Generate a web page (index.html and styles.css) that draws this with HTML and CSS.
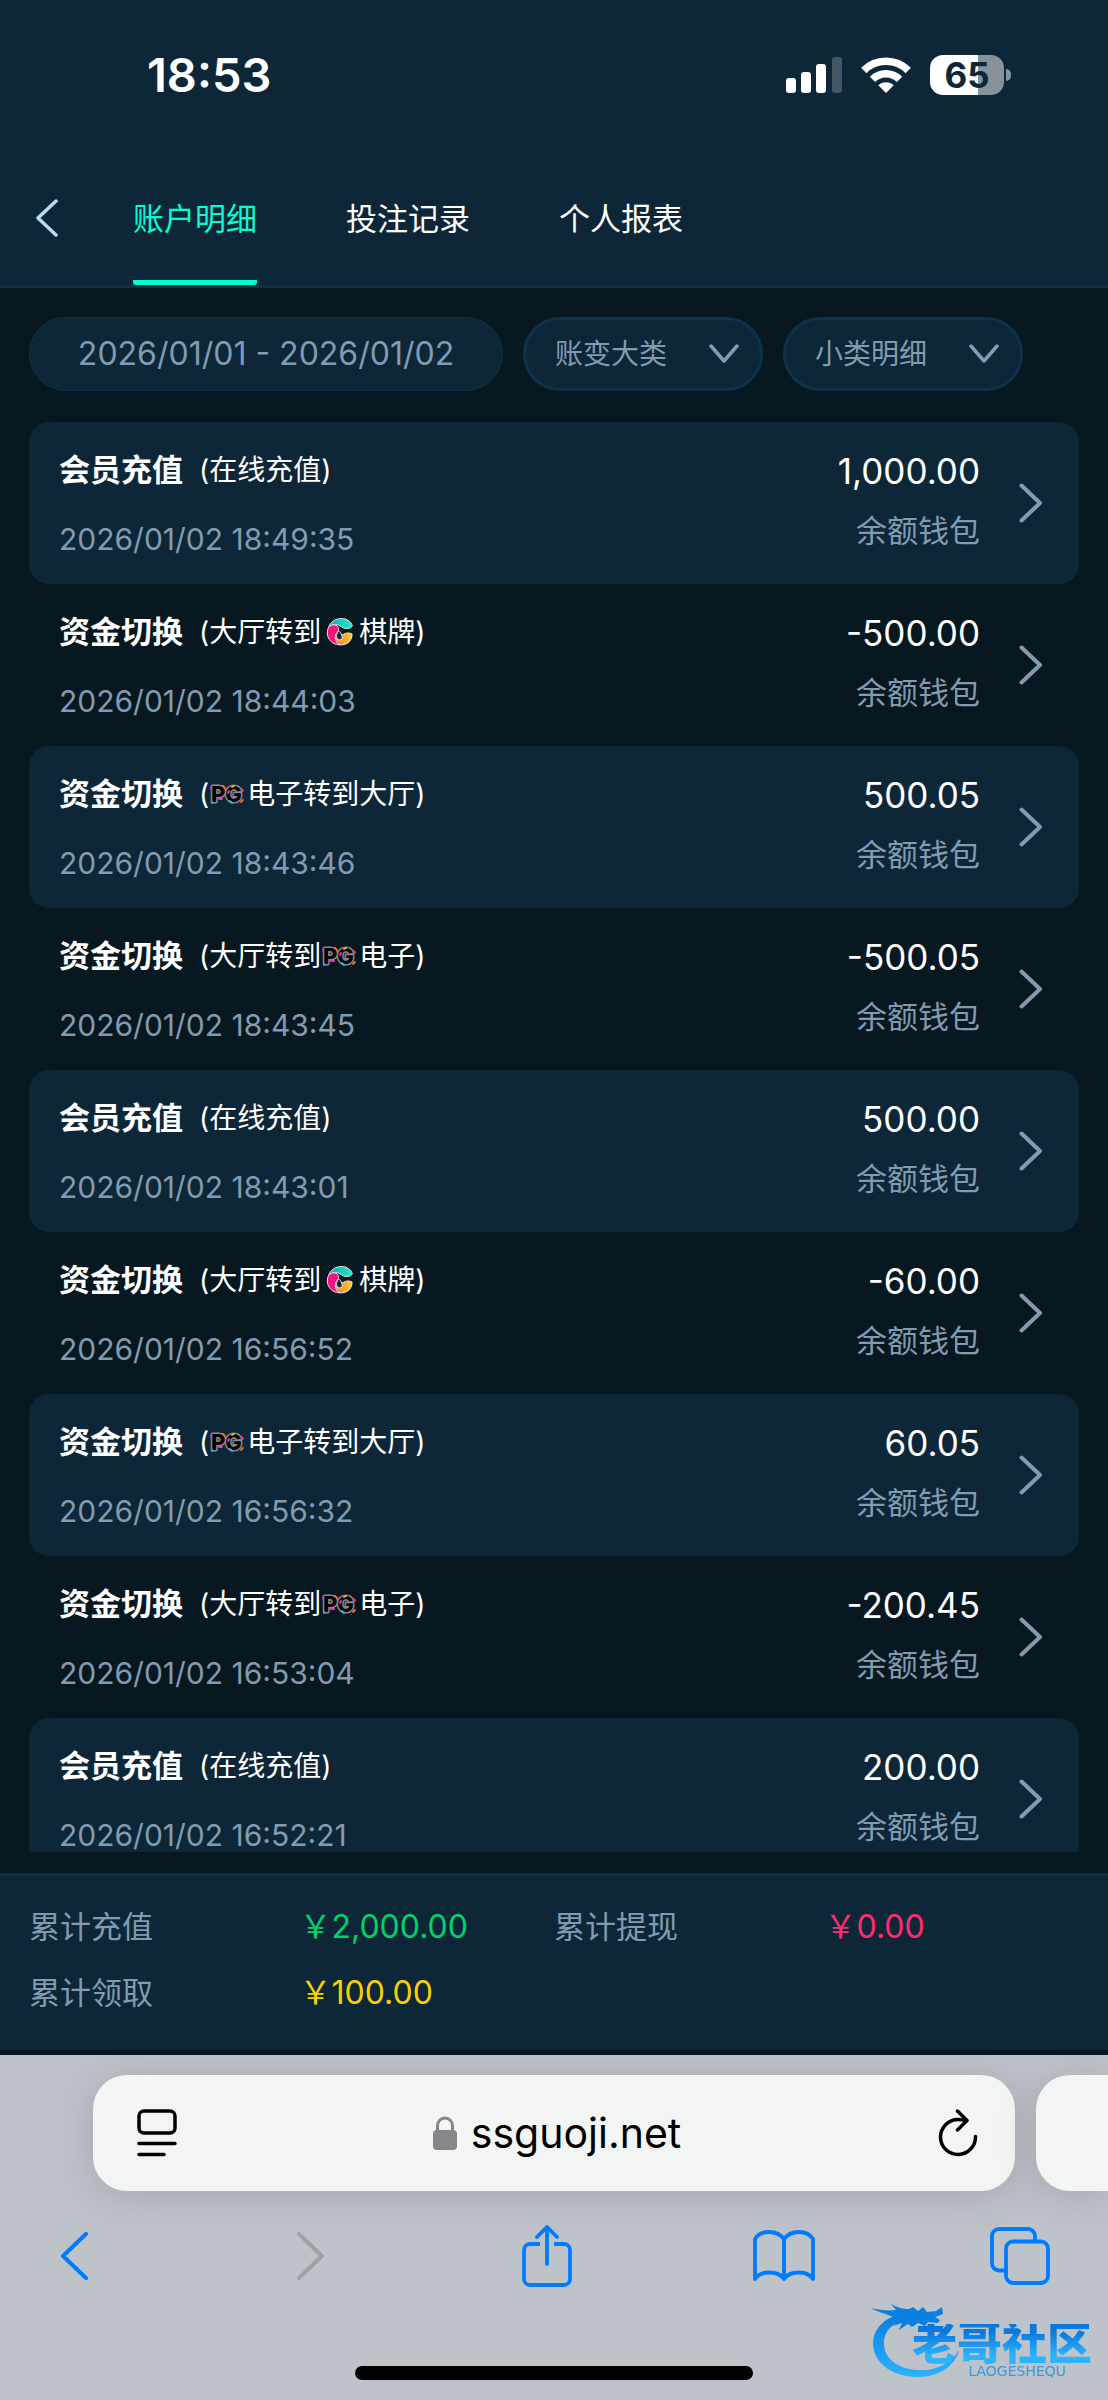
FILE: index.html
```html
<!DOCTYPE html>
<html lang="zh-CN">
<head>
<meta charset="utf-8">
<meta name="viewport" content="width=device-width, initial-scale=1">
<title>账户明细</title>
<link rel="stylesheet" href="styles.css">
</head>
<body>
<svg class="defs" aria-hidden="true">
  <defs>
    <linearGradient id="teal" x1="0" x2="1"><stop offset="0" stop-color="#0fa9b8"/><stop offset="1" stop-color="#1fe8cc"/></linearGradient>
    <linearGradient id="gold" x1="0" x2="1"><stop offset="0" stop-color="#ff6a3c"/><stop offset="1" stop-color="#ffd21f"/></linearGradient>
    <linearGradient id="wave" x1="0" y1="0" x2="0" y2="1"><stop offset="0" stop-color="#0a7de0"/><stop offset="1" stop-color="#2bb4ff"/></linearGradient>
    <symbol id="i-next" viewBox="0 0 24 40"><path d="M2.500 2.500 21 20 2.500 37.500" fill="none" stroke="currentColor" stroke-width="4" stroke-linecap="round" stroke-linejoin="round"/></symbol>
    <symbol id="i-down" viewBox="0 0 30 20"><path d="M2 2 15 17 28 2" fill="none" stroke="currentColor" stroke-width="3.500" stroke-linecap="round" stroke-linejoin="round"/></symbol>
    <symbol id="i-chess" viewBox="0 0 38 30">
      <g stroke="#e9e6e2" stroke-width="1" stroke-linejoin="round">
        <path d="M7.500 10.500C9.500 4.500 15 1.500 20.500 1.500c5 0 10 3 10.800 7.500-1.500 2.500-5 3-8 2.200-3.500-1-5-4-9-3.700-2.800.2-5 1.300-6.800 3z" fill="url(#teal)"/>
        <path d="M7.500 10.500c2-2.500 5-3.400 7.500-2.300 2.300 1 3.300 3.300 2.300 5.600-1 2.100-3 3.200-3 5.700 0 3.200 2.200 5.700 5 8.300C11.500 28 6.500 22.500 6.300 16c0-2 .4-4 1.200-5.500z" fill="#f7137f"/>
        <path d="M19.300 27.800c-3.300-1.300-5-4-5-7.300 1.500 2 3.700 3.300 5.700 2.500 1.800-.8 2-2.800.5-4.500 3-2.500 7.500-3.500 10.500-1.500.7 6-4.700 11.500-11.700 10.800z" fill="url(#gold)"/>
      </g>
      <path d="M17.500 14.500c1.800 0 3 1.500 3 4 1.200 1.500 1 3.300-.5 4-2 .8-4-.6-4.500-2.500-.2-2 .5-4 2-5.500z" fill="#1b2730" stroke="#f0ece8" stroke-width=".9"/>
      <path d="M18 10.500c1.500 1 3 2.500 3.500 4.500 2.500-1 4-1.200 6-1.200-4-.3-6.500-1.300-9.500-3.300z" fill="#071821"/>
    </symbol>
    <symbol id="i-pg" viewBox="0 0 38 24">
      <text x="2" y="20" font-family="Inter, sans-serif" font-weight="800" font-size="22" fill="#050505" stroke="#8f8989" stroke-width="3" stroke-linejoin="round" paint-order="stroke">PG</text>
      <g fill="none" stroke-width="1.800" stroke-linecap="round"><path d="M2 7V5" stroke="#8a4bff"/><path d="M14 4l2 2M34 18l-2 2" stroke="#ff6a2b"/><path d="M3 20v1M21 19l2 2" stroke="#22b8f5"/><path d="M10 17h3M20 9l-1 2" stroke="#ff30c0"/><path d="M23 5l2-1" stroke="#ffb02e"/><path d="M34 9l-1-2" stroke="#ff2e5b"/></g>
    </symbol>
  </defs>
</svg>

<div class="app">
  <header class="top">
    <div class="status">
      <time class="clock">18:53</time>
      <div class="signals">
        <svg width="56" height="36" viewBox="0 0 56 36" fill="#fff" aria-label="信号"><rect y="21" width="10" height="15" rx="3"/><rect x="15" y="15" width="10" height="21" rx="3"/><rect x="30" y="7" width="10" height="29" rx="3"/><rect x="46" width="10" height="36" rx="3" opacity=".22"/></svg>
        <svg width="50" height="36" viewBox="0 0 50 36" fill="none" stroke="#fff" stroke-width="7.500" aria-label="Wi-Fi"><path d="M2.800 13.500a31.500 31.500 0 0 1 44.400 0"/><path d="M11.500 22.300a19 19 0 0 1 27 0"/><path d="M25 36 17.300 28.300a11 11 0 0 1 15.400 0z" fill="#fff" stroke="none"/></svg>
        <div class="battery"><span class="battery-level">65</span></div>
      </div>
    </div>
    <nav class="tabs">
      <button class="back" aria-label="返回"><svg width="24" height="38" viewBox="0 0 24 38"><path d="M21 2 3 19l18 17" fill="none" stroke="#b9dcf4" stroke-width="3.500" stroke-linecap="round" stroke-linejoin="round"/></svg></button>
      <a class="tab tab-active" href="#detail">账户明细</a>
      <a class="tab" href="#bets">投注记录</a>
      <a class="tab" href="#report">个人报表</a>
    </nav>
  </header>

  <div class="filters">
    <button class="range">2026/01/01 - 2026/01/02</button>
    <label class="pick"><select aria-label="账变大类"><option>账变大类</option></select><svg width="30" height="20"><use href="#i-down"/></svg></label>
    <label class="pick"><select aria-label="小类明细"><option>小类明细</option></select><svg width="30" height="20"><use href="#i-down"/></svg></label>
  </div>

  <ul class="records">
    <li><a class="record" href="#r1"><div class="info"><p class="kind"><b>会员充值</b><span class="note">(在线充值)</span></p><time class="when">2026/01/02 18:49:35</time></div><div class="sum"><p class="amount">1,000.00</p><p class="wallet">余额钱包</p></div><svg class="next"><use href="#i-next"/></svg></a></li>
    <li><a class="record" href="#r2"><div class="info"><p class="kind"><b>资金切换</b><span class="note">(大厅转到<svg class="chess"><use href="#i-chess"/></svg>棋牌)</span></p><time class="when">2026/01/02 18:44:03</time></div><div class="sum"><p class="amount">-500.00</p><p class="wallet">余额钱包</p></div><svg class="next"><use href="#i-next"/></svg></a></li>
    <li><a class="record" href="#r3"><div class="info"><p class="kind"><b>资金切换</b><span class="note">(<svg class="pg"><use href="#i-pg"/></svg>电子转到大厅)</span></p><time class="when">2026/01/02 18:43:46</time></div><div class="sum"><p class="amount">500.05</p><p class="wallet">余额钱包</p></div><svg class="next"><use href="#i-next"/></svg></a></li>
    <li><a class="record" href="#r4"><div class="info"><p class="kind"><b>资金切换</b><span class="note">(大厅转到<svg class="pg"><use href="#i-pg"/></svg>电子)</span></p><time class="when">2026/01/02 18:43:45</time></div><div class="sum"><p class="amount">-500.05</p><p class="wallet">余额钱包</p></div><svg class="next"><use href="#i-next"/></svg></a></li>
    <li><a class="record" href="#r5"><div class="info"><p class="kind"><b>会员充值</b><span class="note">(在线充值)</span></p><time class="when">2026/01/02 18:43:01</time></div><div class="sum"><p class="amount">500.00</p><p class="wallet">余额钱包</p></div><svg class="next"><use href="#i-next"/></svg></a></li>
    <li><a class="record" href="#r6"><div class="info"><p class="kind"><b>资金切换</b><span class="note">(大厅转到<svg class="chess"><use href="#i-chess"/></svg>棋牌)</span></p><time class="when">2026/01/02 16:56:52</time></div><div class="sum"><p class="amount">-60.00</p><p class="wallet">余额钱包</p></div><svg class="next"><use href="#i-next"/></svg></a></li>
    <li><a class="record" href="#r7"><div class="info"><p class="kind"><b>资金切换</b><span class="note">(<svg class="pg"><use href="#i-pg"/></svg>电子转到大厅)</span></p><time class="when">2026/01/02 16:56:32</time></div><div class="sum"><p class="amount">60.05</p><p class="wallet">余额钱包</p></div><svg class="next"><use href="#i-next"/></svg></a></li>
    <li><a class="record" href="#r8"><div class="info"><p class="kind"><b>资金切换</b><span class="note">(大厅转到<svg class="pg"><use href="#i-pg"/></svg>电子)</span></p><time class="when">2026/01/02 16:53:04</time></div><div class="sum"><p class="amount">-200.45</p><p class="wallet">余额钱包</p></div><svg class="next"><use href="#i-next"/></svg></a></li>
    <li><a class="record" href="#r9"><div class="info"><p class="kind"><b>会员充值</b><span class="note">(在线充值)</span></p><time class="when">2026/01/02 16:52:21</time></div><div class="sum"><p class="amount">200.00</p><p class="wallet">余额钱包</p></div><svg class="next"><use href="#i-next"/></svg></a></li>
  </ul>

  <dl class="totals">
    <div class="total"><dt>累计充值</dt><dd class="green">￥2,000.00</dd></div>
    <div class="total"><dt>累计提现</dt><dd class="pink">￥0.00</dd></div>
    <div class="total"><dt>累计领取</dt><dd class="yellow">￥100.00</dd></div>
  </dl>

  <footer class="browser">
    <div class="bars">
      <div class="address">
        <button aria-label="页面设置"><svg width="40" height="48" viewBox="0 0 40 48" fill="none" stroke="#000" stroke-width="3.500" stroke-linecap="round"><rect x="2" y="2" width="36" height="22" rx="5"/><path d="M2 34.500h36M2 45.500h25"/></svg></button>
        <button class="url"><svg width="24" height="34" viewBox="0 0 24 34"><rect y="14" width="24" height="20" rx="4" fill="#87868b"/><path d="M4.500 15V9.500a7.500 7.500 0 0 1 15 0V15" fill="none" stroke="#87868b" stroke-width="3"/></svg>ssguoji.net</button>
        <button aria-label="刷新"><svg width="42" height="48" viewBox="0 0 42 48" fill="none" stroke="#000" stroke-width="3.500" stroke-linecap="round" stroke-linejoin="round"><path d="M38.500 27.500A17.500 17.500 0 1 1 21 10.500q4 0 8 1.500"/><path d="M20.500 2 30 11.500 20.500 21"/></svg></button>
      </div>
      <div class="next-page"></div>
    </div>
    <nav class="tools">
      <button aria-label="后退"><svg width="28" height="48" viewBox="0 0 28 48" fill="none" stroke="#007aff" stroke-width="4" stroke-linecap="round" stroke-linejoin="round"><path d="M26 2 3 24l23 22"/></svg></button>
      <button aria-label="前进" disabled><svg width="28" height="48" viewBox="0 0 28 48" fill="none" stroke="#9fa2a5" stroke-width="4" stroke-linecap="round" stroke-linejoin="round"><path d="M2 2l23 22L2 46"/></svg></button>
      <button aria-label="分享"><svg width="50" height="62" viewBox="0 0 50 62" fill="none" stroke="#007aff" stroke-width="3.800" stroke-linecap="round" stroke-linejoin="round"><path d="M18 19H8a6 6 0 0 0-6 6v29a6 6 0 0 0 6 6h34a6 6 0 0 0 6-6V25a6 6 0 0 0-6-6H32" stroke-linecap="butt"/><path d="M25 39V2M15 12 25 2l10 10"/></svg></button>
      <button aria-label="书签"><svg width="62" height="52" viewBox="0 0 62 52" fill="none" stroke="#007aff" stroke-width="3.800" stroke-linecap="round" stroke-linejoin="round"><path d="M31 9.500C28 4.500 22 2 16 2S5 4 2 9v40c3-4.500 8-6.500 14-6.500S28 44.500 31 49c3-4.500 9-6.500 15-6.500S57 44.500 60 49V9c-3-5-8-7-14-7S34 4.500 31 9.500zM31 9.500V49"/></svg></button>
      <button aria-label="标签页"><svg width="60" height="58" viewBox="0 0 60 58" fill="none" stroke="#007aff" stroke-width="3.800"><rect x="16" y="14.500" width="42" height="41.500" rx="7"/><path d="M16 43.500H9a7 7 0 0 1-7-7V9a7 7 0 0 1 7-7h29a7 7 0 0 1 7 7v5"/></svg></button>
    </nav>
    <div class="home"></div>
    <div class="mark">
      <svg width="92" height="74" viewBox="0 0 92 74"><path d="M26 11C7 17-1 32 3 47c5 17 24 26 44 26 21 0 37-11 41-27-8 13-23 21-39 20-19 0-34-9-36-24C12 29 20 18 36 17z" fill="url(#wave)"/><path d="M0 4c8 2 17 3 25 2l-5-6c7 4 12 5 18 5l4-2 5 4 5-4 4 5 9-1 6-4 1 7-8 3 5 3-2 3-10-1-3 4-7-3-6 4-4-3-9 6 3-7-9 3 6-6-9 1 5-3C15 9 5 8 0 4z" fill="#0a80e2"/></svg>
      <div class="mark-text"><strong>老哥社区</strong><small>LAOGESHEQU</small></div>
    </div>
  </footer>
</div>
</body>
</html>
```
FILE: styles.css
```css
* { box-sizing: border-box; }

body {
  margin: 0;
  background: #071821;
  color: #fff;
  font-family: Inter, "Noto Sans CJK SC", sans-serif;
  font-size: 31px;
  line-height: 40px;
}

p, ul, dl, dd { margin: 0; padding: 0; }
ul { list-style: none; }
a { color: inherit; text-decoration: none; }
svg { display: block; flex: none; }

button, select {
  margin: 0;
  padding: 0;
  border: 0;
  background: none;
  color: inherit;
  font: inherit;
}

.defs { position: absolute; width: 0; height: 0; }

.app {
  display: flex;
  flex-direction: column;
  height: 100vh;
}

/* status bar and tabs */
.top {
  flex: none;
  background: #0d2738;
  border-bottom: 3px solid #0e324b;
}

.status {
  display: flex;
  align-items: center;
  justify-content: space-between;
  height: 150px;
  padding: 0 104px 0 147px;
}

.clock { font-size: 47px; font-weight: 600; }

.signals { display: flex; align-items: center; gap: 19px; }

.battery {
  position: relative;
  display: flex;
  align-items: center;
  justify-content: center;
  width: 74px;
  height: 40px;
  border-radius: 13px;
  background: linear-gradient(90deg, #fff 65%, #86939b 65%);
  color: #0d2738;
  font-size: 35px;
  font-weight: 700;
}

.battery::after {
  content: "";
  position: absolute;
  left: 76px;
  top: 14px;
  width: 5px;
  height: 12px;
  border-radius: 0 6px 6px 0;
  background: #86939b;
}

.tabs {
  display: flex;
  align-items: stretch;
  height: 135px;
  padding-left: 35px;
}

.back { width: 98px; }

.tab {
  margin-right: 89px;
  border-bottom: 5px solid transparent;
  line-height: 138px;
}

.tab-active { color: #00ffd5; border-color: #00ffd5; border-radius: 3px; }

/* filters */
.filters {
  display: flex;
  flex: none;
  gap: 20px;
  padding: 29px 29px 31px;
  color: #829bb0;
}

.range {
  width: 474px;
  height: 74px;
  border: 1px solid #0e324b;
  border-radius: 37px;
  background: #0d2738;
  font-size: 32px;
}

.pick {
  display: flex;
  align-items: center;
  width: 240px;
  height: 74px;
  padding-right: 21px;
  border: 3px solid #0e324b;
  border-radius: 37px;
  background: #0d2738;
}

.pick select {
  flex: 1;
  padding-left: 29px;
  appearance: none;
  font-size: 28px;
}

/* records */
.records {
  flex: 1;
  min-height: 0;
  margin: 0 29px 21px;
  overflow-y: auto;
  scrollbar-width: none;
}

.record {
  display: flex;
  align-items: center;
  height: 162px;
  padding: 0 36px 0 30px;
  border-radius: 20px;
}

.records li:nth-child(odd) .record { background: #0d2738; }

.info {
  display: flex;
  flex: 1;
  flex-direction: column;
  gap: 29px;
  padding-top: 3px;
}

.kind { display: flex; align-items: center; gap: 16px; }

.note { display: flex; align-items: center; font-size: 28px; }

.chess { width: 38px; height: 30px; }
.pg { width: 38px; height: 24px; }

.when { color: #829bb0; font-size: 30px; }

.sum {
  display: flex;
  flex-direction: column;
  gap: 20px;
  margin-right: 39px;
  padding-bottom: 5px;
  text-align: right;
}

.amount { font-size: 35px; }
.wallet { color: #829bb0; }

.next { width: 24px; height: 40px; color: #829bb0; }

/* totals */
.totals {
  display: grid;
  flex: none;
  grid-template-columns: 1fr 1fr;
  gap: 26px 0;
  height: 177px;
  padding: 31px 29px 0;
  border-top: 3px solid #0e324b;
  background: #0d2738;
  align-content: start;
}

.total { display: grid; grid-template-columns: 1fr 1fr; column-gap: 16px; }
.total dt { color: #829bb0; }
.total dd { font-size: 32px; }
.green { color: #00d26a; }
.pink { color: #ff2b6d; }
.yellow { color: #f7d000; }

/* browser chrome */
.browser {
  position: relative;
  flex: none;
  margin-top: 5px;
  background: #bec3c9;
  overflow: hidden;
}

.bars { display: flex; gap: 21px; padding: 20px 0 0 93px; }

.address {
  display: flex;
  flex: 1;
  align-items: center;
  justify-content: space-between;
  height: 116px;
  padding: 0 36px 0 44px;
  border-radius: 34px;
  background: #f3f5f5;
  box-shadow: 0 4px 40px rgba(60, 75, 80, .22);
  color: #000;
}

.url { display: flex; align-items: center; gap: 14px; font-size: 41px; }

.next-page {
  width: 72px;
  border-radius: 34px 0 0 34px;
  background: #f3f5f5;
  box-shadow: 0 4px 40px rgba(60, 75, 80, .22);
}

.tools {
  display: flex;
  align-items: center;
  justify-content: space-between;
  height: 130px;
  padding: 0 57px 0 43px;
}

.tools button {
  display: flex;
  justify-content: center;
  width: 62px;
}

.home {
  width: 36%;
  height: 14px;
  margin: 45px auto 20px;
  border-radius: 7px;
  background: #000;
}

.mark { position: absolute; right: 16px; bottom: 22px; display: flex; }

.mark-text {
  display: flex;
  flex-direction: column;
  align-items: center;
  margin: 20px 0 0 -51px;
}

.mark-text strong {
  background: linear-gradient(#0a78dc 20%, #2bb4ff 80%);
  background-clip: text;
  color: transparent;
  font-size: 45px;
  font-weight: 900;
  line-height: 40px;
}

.mark-text small {
  color: #3f97dc;
  font: 14px/14px "DejaVu Sans", sans-serif;
  margin-left: 30px;
}
```
